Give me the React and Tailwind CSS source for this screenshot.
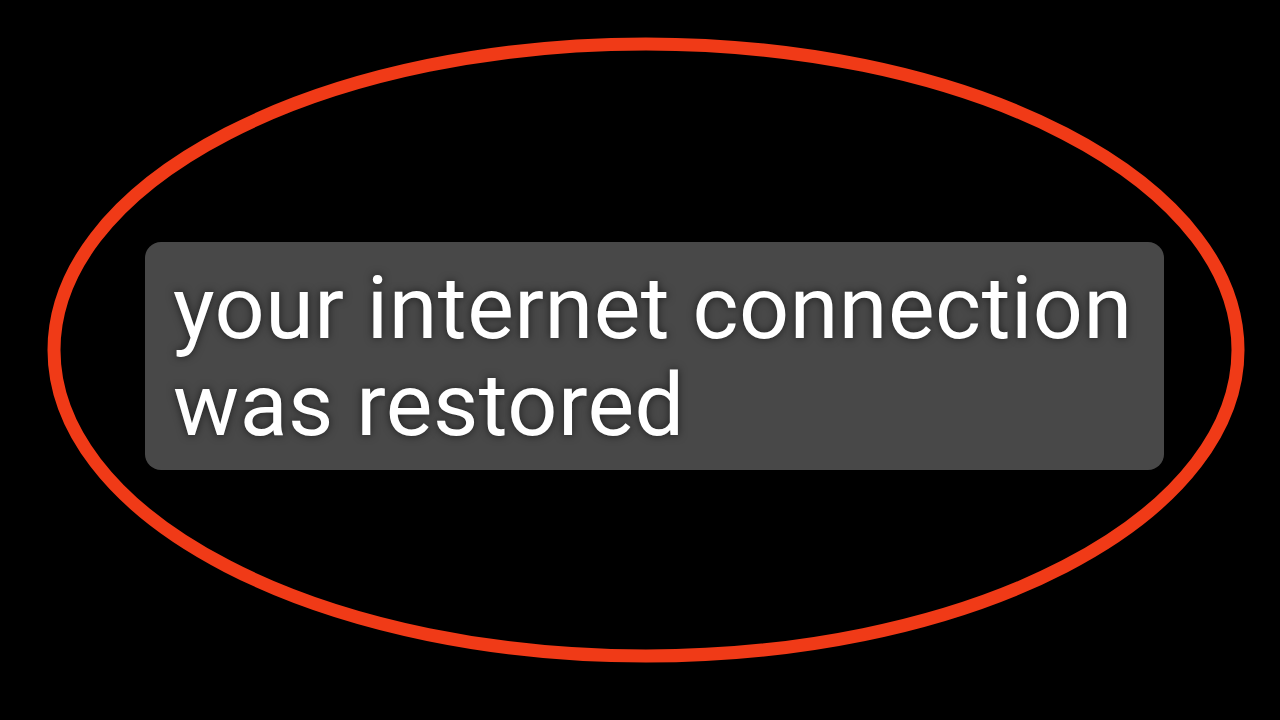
export default function App() {
  return (
    <div className="relative w-[1280px] h-[720px] bg-black overflow-hidden" style={{ fontFamily: "Roboto, 'Noto Sans', sans-serif" }}>
      {/* red ellipse */}
      <svg className="absolute inset-0" width="1280" height="720" viewBox="0 0 1280 720">
        <ellipse cx="646" cy="350" rx="592" ry="306" fill="none" stroke="#f03a17" strokeWidth="13" />
      </svg>

      <div className="relative pt-[242px] pl-[145px]">
        <div className="w-[1019px] h-[228px] bg-[#484848] rounded-[16px] pl-[28px] pt-[17px]">
          <p className="text-white text-[88px] leading-[97px] tracking-[0.5px] [text-shadow:0_0_8px_rgba(0,0,0,0.6)]">
            your internet connection
            <br />
            was restored
          </p>
        </div>
      </div>
    </div>
  );
}
